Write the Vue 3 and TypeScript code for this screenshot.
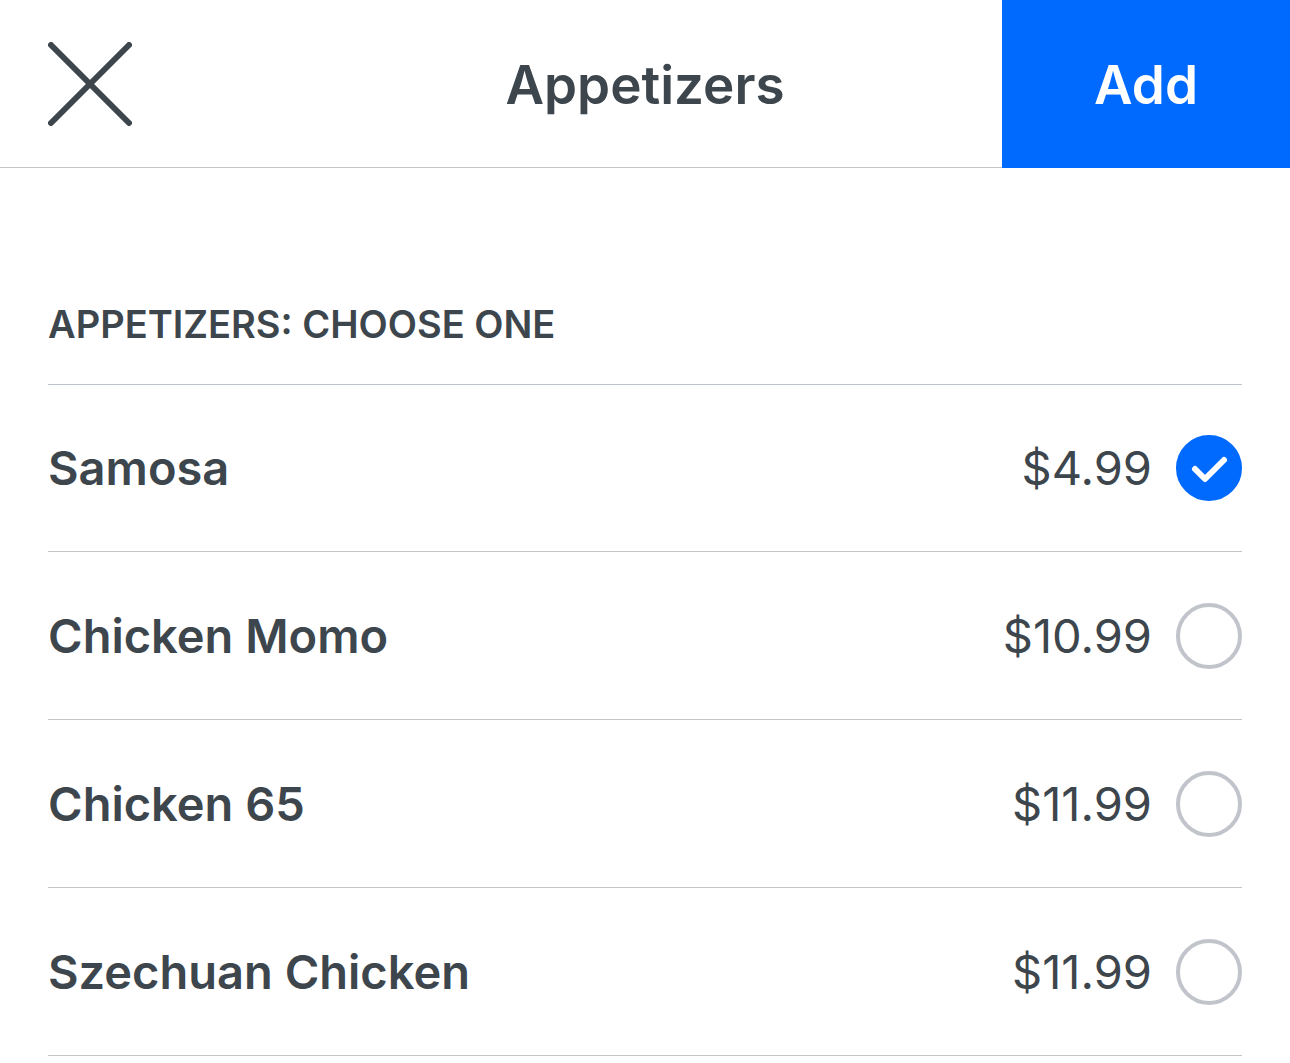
<script setup lang="ts">
import { ref } from 'vue'

interface MenuItem {
  id: string
  name: string
  price: string
}

const items: MenuItem[] = [
  { id: 'samosa', name: 'Samosa', price: '$4.99' },
  { id: 'momo', name: 'Chicken Momo', price: '$10.99' },
  { id: 'chicken-65', name: 'Chicken 65', price: '$11.99' },
  { id: 'szechuan', name: 'Szechuan Chicken', price: '$11.99' },
]

const selected = ref('samosa')
</script>

<template>
  <div class="screen">
    <header class="bar">
      <button class="close" type="button" aria-label="Close">
        <svg viewBox="0 0 84 84" width="84" height="84" aria-hidden="true">
          <path d="M3 3 81 81M81 3 3 81" fill="none" stroke="#3d464d" stroke-width="6" stroke-linecap="round" />
        </svg>
      </button>
      <h1 class="title">Appetizers</h1>
      <button class="add" type="button">Add</button>
    </header>

    <main class="content">
      <h2 id="group-title" class="group-title">APPETIZERS: CHOOSE ONE</h2>
      <ul class="options" role="radiogroup" aria-labelledby="group-title">
        <li v-for="item in items" :key="item.id" class="row">
          <label class="option" :for="item.id">
            <span class="name">{{ item.name }}</span>
            <span class="price">{{ item.price }}</span>
            <span class="control">
              <input :id="item.id" v-model="selected" class="radio" type="radio" name="appetizer" :value="item.id" />
              <svg v-if="selected === item.id" class="check" viewBox="0 0 66 66" aria-hidden="true">
                <path d="M19 34 29 44 48 25" fill="none" stroke="#fff" stroke-width="6" stroke-linecap="round" stroke-linejoin="round" />
              </svg>
            </span>
          </label>
        </li>
      </ul>
    </main>
  </div>
</template>

<style>
body {
  margin: 0;
  background: #fff;
}
</style>

<style scoped>
.screen {
  color: #3d464d;
  font-family: Inter, "Liberation Sans", sans-serif;
}

.bar {
  display: grid;
  grid-template-columns: 288px 1fr 288px;
  height: 168px;
  background: linear-gradient(#c4c4c6, #c4c4c6) bottom / 100% 1px no-repeat;
}

.close {
  display: flex;
  align-items: center;
  padding: 0 48px;
  border: 0;
  background: none;
  cursor: pointer;
}

.title,
.add {
  margin: 0;
  padding: 2px 0 0;
  font-family: inherit;
  font-size: 53px;
  font-weight: 600;
  line-height: 166px;
  text-align: center;
}

.add {
  border: 0;
  background: #006aff;
  color: #fff;
  cursor: pointer;
}

.content {
  padding: 126px 48px 0;
}

.group-title {
  margin: 0;
  padding-bottom: 30px;
  font-size: 38px;
  font-weight: 600;
  line-height: 60px;
}

.options {
  margin: 0;
  padding: 0;
  list-style: none;
}

.row {
  border-bottom: 1px solid #c4c4c6;
}

.row:first-child {
  border-top: 1px solid #bcc3ca;
}

.option {
  display: flex;
  align-items: center;
  padding: 51px 0 50px;
  font-size: 47px;
  line-height: 60px;
  cursor: pointer;
}

.row:first-child .option {
  padding-top: 50px;
}

.name {
  flex: 1;
  font-weight: 600;
}

.price {
  margin-right: 24px;
}

.control {
  display: grid;
  width: 66px;
  height: 66px;
}

.radio,
.check {
  grid-area: 1 / 1;
  width: 66px;
  height: 66px;
  margin: 0;
}

.radio {
  appearance: none;
  box-sizing: border-box;
  border: 4px solid #c2c4cc;
  border-radius: 50%;
  cursor: pointer;
}

.radio:checked {
  border-color: #006aff;
  background: #006aff;
}

.check {
  z-index: 1;
  pointer-events: none;
}
</style>
